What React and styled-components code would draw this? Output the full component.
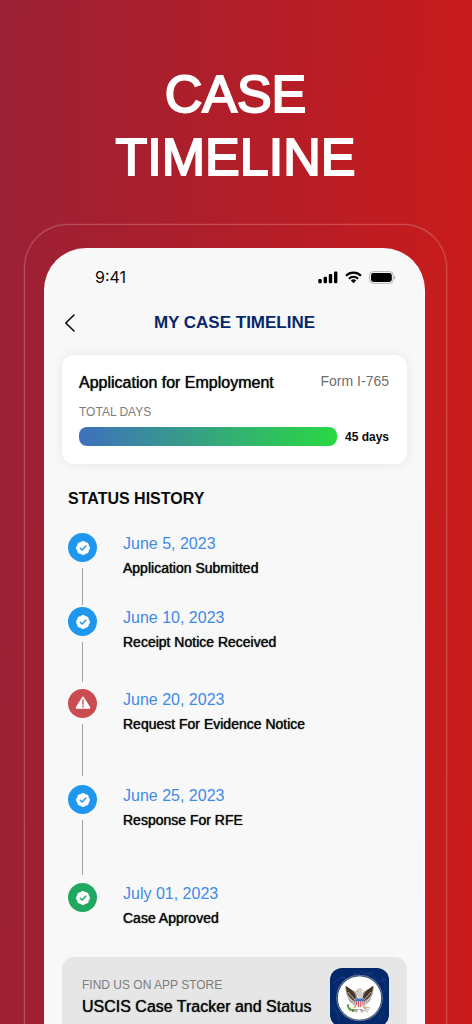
import React from "react";
import styled, { createGlobalStyle, css } from "styled-components";

const GlobalStyle = createGlobalStyle`
  *, *::before, *::after { box-sizing: border-box; }
  body {
    margin: 0;
    font-family: "Liberation Sans", Arial, sans-serif;
    color: #0b0b0b;
  }
  h1, h2, h3, p, ol { margin: 0; padding: 0; }
`;

/* Liberation Sans has no medium weight: thicken the regular one slightly. */
const medium = css`
  font-weight: 400;
  text-shadow: 0 0 1px currentColor;
`;

const Poster = styled.main`
  display: flex;
  flex-direction: column;
  height: 100vh;
  padding: 63px 25px 0 24px;
  overflow: hidden;
  background: linear-gradient(91deg, #9b2035 0%, #b21e29 50%, #ca1b1b 100%);
`;

const Headline = styled.h1`
  flex: none;
  margin-bottom: 35px;
  text-align: center;
  font-size: 52px;
  font-weight: 400;
  line-height: 63px;
  color: #fff;
  -webkit-text-stroke: 2px #fff;
`;

const Frame = styled.div`
  flex: 1 0 auto;
  padding: 23px 21px 0 19px;
  border: 1px solid rgba(255, 255, 255, 0.22);
  border-bottom: 0;
  border-radius: 44px 44px 0 0;
  box-shadow: 0 0 2px rgba(255, 255, 255, 0.2);
`;

const Screen = styled.div`
  min-height: 100%;
  padding: 0 18px;
  border-radius: 42px 42px 0 0;
  background: #f8f8f8;
`;

const StatusBar = styled.div`
  display: flex;
  align-items: center;
  justify-content: space-between;
  height: 58px;
  padding: 0 11px 0 33px;
`;

const Clock = styled.time`
  font-family: Inter, sans-serif;
  font-size: 16px;
  line-height: 20px;
`;

const StatusIcons = styled.div`
  display: flex;
  align-items: center;
  gap: 7px;
`;

const NavBar = styled.header`
  display: grid;
  grid-template-columns: 20px 1fr 20px;
  align-items: center;
  height: 34px;
  margin-bottom: 15px;
`;

const BackButton = styled.button`
  display: flex;
  padding: 0 0 0 2px;
  border: 0;
  background: none;
  color: #0b0b0b;
`;

const NavTitle = styled.h2`
  text-align: center;
  font-size: 17px;
  line-height: 20px;
  color: #06286b;
`;

const SummaryCard = styled.section`
  padding: 18px 18px 18px 17px;
  border-radius: 12px;
  background: #fff;
  box-shadow: 0 0 12px rgba(0, 0, 0, 0.08);
`;

const SummaryTop = styled.div`
  display: flex;
  align-items: flex-start;
  justify-content: space-between;
  margin-bottom: 10px;
`;

const CardTitle = styled.h3`
  ${medium}
  font-size: 16px;
  line-height: 20px;
`;

const FormName = styled.span`
  font-size: 14px;
  line-height: 16px;
  color: #6f6f6f;
`;

const Caption = styled.p`
  font-size: 12px;
  line-height: 18px;
  color: #7d7d7d;
`;

const ProgressRow = styled.div`
  display: flex;
  align-items: center;
  gap: 8px;
  margin-top: 6px;
`;

const Progress = styled.div`
  flex: 1;
  height: 19px;
  border-radius: 8px;
  background: linear-gradient(90deg, #3e70be, #34ab78 55%, #29d842);
`;

const Days = styled.span`
  font-size: 12px;
  font-weight: 700;
  line-height: 18px;
`;

const SectionTitle = styled.h2`
  margin: 25px 6px 24px;
  font-size: 16px;
  line-height: 20px;
`;

const Timeline = styled.ol`
  padding: 0 6px;
  list-style: none;
`;

const Step = styled.li`
  display: flex;
  gap: 26px;
  min-height: ${(p) => p.$height}px;
`;

const Marker = styled.div`
  display: flex;
  flex-direction: column;
  align-items: center;
`;

const Dot = styled.span`
  display: flex;
  flex: none;
  align-items: center;
  justify-content: center;
  width: 29px;
  height: 29px;
  border-radius: 50%;
  background: ${(p) => p.$color};
`;

const Connector = styled.span`
  flex: 1;
  width: 1px;
  margin: 6px 0 ${(p) => p.$gap}px;
  background: #a3a3a3;
`;

const StepDate = styled.time`
  display: block;
  padding-top: 1px;
  font-size: 16px;
  line-height: 20px;
  color: #3f8ae6;
`;

const StepLabel = styled.p`
  ${medium}
  margin-top: 5px;
  font-size: 14px;
  line-height: 18px;
`;

const StoreCard = styled.a`
  display: flex;
  align-items: flex-start;
  justify-content: space-between;
  margin-top: 30px;
  padding: 11px 18px 20px 20px;
  border-radius: 12px;
  background: #e6e6e6;
  color: inherit;
  text-decoration: none;
`;

const StoreText = styled.div`
  display: grid;
  gap: 3px;
  padding-top: 8px;
`;

const BLUE = "#1f97ee";
const RED = "#ca4c50";
const GREEN = "#1fa961";

const steps = [
  { date: "June 5, 2023", iso: "2023-06-05", label: "Application Submitted", color: BLUE, height: 74, gap: 2 },
  { date: "June 10, 2023", iso: "2023-06-10", label: "Receipt Notice Received", color: BLUE, height: 82, gap: 7 },
  { date: "June 20, 2023", iso: "2023-06-20", label: "Request For Evidence Notice", color: RED, height: 96, gap: 9, alert: true },
  { date: "June 25, 2023", iso: "2023-06-25", label: "Response For RFE", color: BLUE, height: 98, gap: 8 },
  { date: "July 01, 2023", iso: "2023-07-01", label: "Case Approved", color: GREEN, height: 29, last: true },
];

const BadgeIcon = ({ color }) => (
  <svg width="16" height="16" viewBox="0 0 24 24" aria-hidden="true">
    <path
      fill="#fff"
      stroke="#fff"
      strokeWidth="1"
      strokeLinejoin="round"
      d="M3.85 8.62a4 4 0 0 1 4.78-4.77 4 4 0 0 1 6.74 0 4 4 0 0 1 4.78 4.78 4 4 0 0 1 0 6.74 4 4 0 0 1-4.77 4.78 4 4 0 0 1-6.75 0 4 4 0 0 1-4.78-4.77 4 4 0 0 1 0-6.76Z"
    />
    <path d="m7.8 12.3 2.9 2.7 5.4-5.8" fill="none" stroke={color} strokeWidth="2.2" strokeLinecap="round" strokeLinejoin="round" />
  </svg>
);

const AlertIcon = ({ color }) => (
  <svg width="16" height="16" viewBox="0 0 16 16" aria-hidden="true">
    <path d="M8 1.4 14.4 11.8H1.6Z" fill="#fff" stroke="#fff" strokeWidth="1.8" strokeLinejoin="round" />
    <path d="M8 4v4.200" stroke={color} strokeWidth="1.4" strokeLinecap="round" />
    <circle cx="8" cy="10.500" r="0.9" fill={color} />
  </svg>
);

const SignalIcon = () => (
  <svg width="20" height="13" viewBox="0 0 20 13" aria-hidden="true">
    <rect x="0.3" y="8" width="3.4" height="4.2" rx="1" />
    <rect x="5.6" y="5.8" width="3.4" height="6.4" rx="1" />
    <rect x="10.8" y="3.1" width="3.4" height="9.1" rx="1" />
    <rect x="16" y="0.6" width="3.4" height="11.6" rx="1" />
  </svg>
);

const WifiIcon = () => (
  <svg width="17" height="13" viewBox="0 0 17 13" aria-hidden="true">
    <g fill="none" stroke="#000" strokeWidth="2.1">
      <path d="M1 4.7a10.6 10.6 0 0 1 15 0" />
      <path d="M3.9 7.7a6.5 6.5 0 0 1 9.2 0" />
    </g>
    <path d="M5.8 9.6a3.9 3.9 0 0 1 5.4 0L8.5 12.3Z" />
  </svg>
);

const BatteryIcon = () => (
  <svg width="27" height="13" viewBox="0 0 27 13" aria-hidden="true">
    <rect x="0.6" y="0.6" width="23.6" height="11.8" rx="3.6" fill="none" stroke="#b4b4b4" />
    <rect x="2" y="2" width="20.8" height="9" rx="2.4" />
    <path d="M25.2 4.6c1.5.5 1.5 3.3 0 3.8Z" fill="#a8a8a8" />
  </svg>
);

const SealIcon = () => (
  <svg width="59" height="59" viewBox="0 0 59 59" role="img" aria-label="App icon">
    <rect width="59" height="59" rx="12" fill="#03296c" />
    <g fill="none" stroke="#234682" strokeWidth="0.7">
      <path d="M3 15l9-6 7 3 6-7 8 4 7-3 9 8 7-3M2 38l5 6 2 9M52 9l4 9-3 7M5 21l5-4M48 51l7-8M30 3l5 3 9-2" />
    </g>
    <circle cx="29.5" cy="30" r="23.2" fill="#8291ad" />
    <circle cx="29.5" cy="30" r="22.2" fill="none" stroke="#24385f" strokeWidth="0.8" />
    <circle cx="29.5" cy="30" r="21.6" fill="#fff" />
    <g>
      <path d="M26 41l-4 3 3-1 1 2 3-4 3 4 1-2 3 1-4-3Z" fill="#a9a4a0" />
      <path d="M15 18c1 7 2 12 5 16l6 5 2-8-2-7Z" fill="#aaa198" />
      <path d="M44 18c-1 7-2 12-5 16l-6 5-2-8 2-7Z" fill="#aaa198" />
      <path d="M16 18c4 3 9 5 10 11l-1 4c-5-2-9-8-9-15Z" fill="#46372c" />
      <path d="M43 18c-4 3-9 5-10 11l1 4c5-2 9-8 9-15Z" fill="#46372c" />
      <path d="M18 24l7 8M17 28l7 7M41 24l-7 8M42 28l-7 7M20 34l5 3M39 34l-5 3" stroke="#e0dcd6" strokeWidth="0.8" />
      <path d="M27 27c-1-4 0-7 3-7 2 0 3 2 2 4l1 5-3 3Z" fill="#d4d0ca" />
      <path d="M28 22l-3 1 3 1Z" fill="#d9a22e" />
      <path d="M25.5 30.5h8.5v5c0 3-2 4-4.250 5-2.250-1-4.250-2-4.250-5Z" fill="#f3e9ec" />
      <path d="M26.700 33v4M28.700 33v6M30.800 33v6M32.900 33v4" stroke="#c9405a" strokeWidth="1" />
      <path d="M25.500 30.500h8.500v2.700h-8.500Z" fill="#3f78c9" />
      <path d="M18 37c0 5 3 6 7 5" fill="none" stroke="#5f9a49" strokeWidth="1.600" />
      <circle cx="18" cy="37.500" r="1.300" fill="#5f9a49" />
      <circle cx="20" cy="41" r="1.400" fill="#73a850" />
      <circle cx="23" cy="42.500" r="1.400" fill="#4c8b40" />
      <path d="M34 40l5 2M34 41l4 3M35 39l5 1" stroke="#98958f" strokeWidth="0.800" />
      <path d="M24 40l2-2M35 40l-2-2" stroke="#d0a13b" strokeWidth="1.200" />
    </g>
  </svg>
);

export default function App() {
  return (
    <>
      <GlobalStyle />
      <Poster>
        <Headline>
          CASE
          <br />
          TIMELINE
        </Headline>
        <Frame>
          <Screen>
            <StatusBar>
              <Clock>9:41</Clock>
              <StatusIcons>
                <SignalIcon />
                <WifiIcon />
                <BatteryIcon />
              </StatusIcons>
            </StatusBar>
            <NavBar>
              <BackButton type="button" aria-label="Back">
                <svg width="12" height="20" viewBox="0 0 12 20" fill="none" stroke="currentColor" strokeWidth="1.6" strokeLinecap="round" strokeLinejoin="round">
                  <path d="M10 2 1.800 10 10 18" />
                </svg>
              </BackButton>
              <NavTitle>MY CASE TIMELINE</NavTitle>
            </NavBar>
            <SummaryCard>
              <SummaryTop>
                <CardTitle>Application for Employment</CardTitle>
                <FormName>Form I-765</FormName>
              </SummaryTop>
              <Caption>TOTAL DAYS</Caption>
              <ProgressRow>
                <Progress />
                <Days>45 days</Days>
              </ProgressRow>
            </SummaryCard>
            <SectionTitle>STATUS HISTORY</SectionTitle>
            <Timeline>
              {steps.map((s) => (
                <Step key={s.iso} $height={s.height}>
                  <Marker>
                    <Dot $color={s.color}>
                      {s.alert ? <AlertIcon color={s.color} /> : <BadgeIcon color={s.color} />}
                    </Dot>
                    {!s.last && <Connector $gap={s.gap} />}
                  </Marker>
                  <div>
                    <StepDate dateTime={s.iso}>{s.date}</StepDate>
                    <StepLabel>{s.label}</StepLabel>
                  </div>
                </Step>
              ))}
            </Timeline>
            <StoreCard href="#app-store">
              <StoreText>
                <Caption>FIND US ON APP STORE</Caption>
                <CardTitle>USCIS Case Tracker and Status</CardTitle>
              </StoreText>
              <SealIcon />
            </StoreCard>
          </Screen>
        </Frame>
      </Poster>
    </>
  );
}
